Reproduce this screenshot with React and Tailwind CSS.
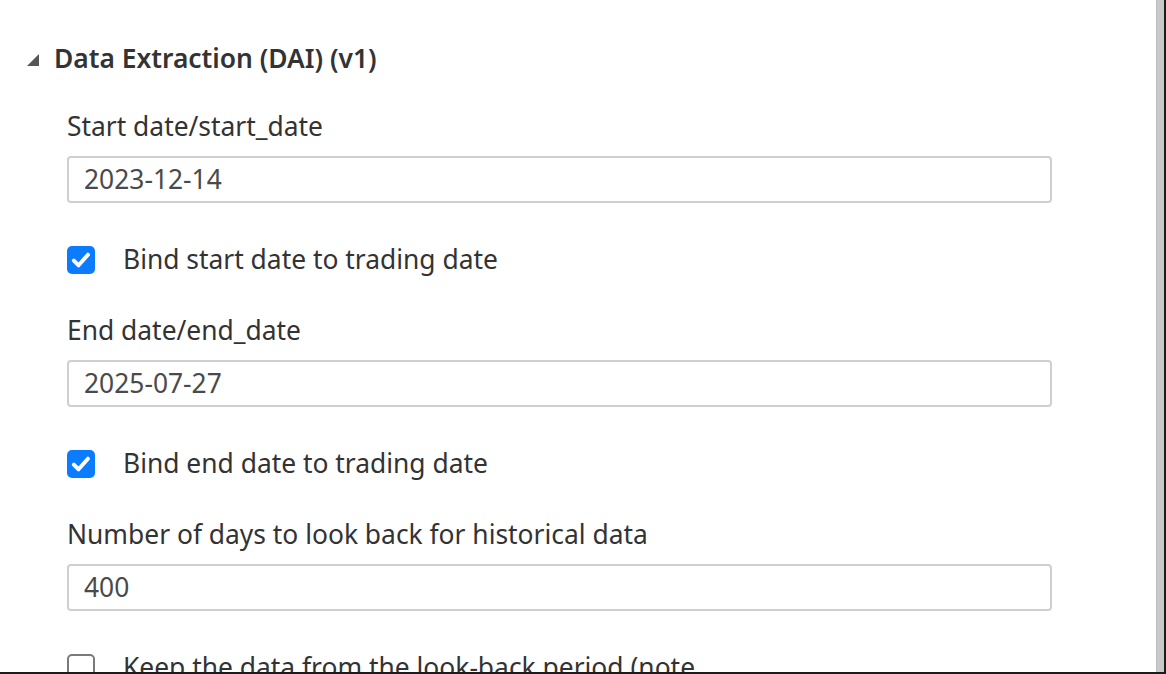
import React from 'react';

const Field = ({label, value}) => (
    <div className="flex flex-col">
        <label className="h-[36px] leading-[36px] text-[26.4px] text-[#333333]">{label}</label>
        <div className="mt-[12px] h-[47px] w-[985px] rounded-[4px] border-2 border-[#cfcfcf] px-[15px] flex items-center">
            <span className="text-[26.4px] text-[#4a4a4a]">{value}</span>
        </div>
    </div>
);

const Check = ({checked, label}) => (
    <div className="flex items-center h-[36px] gap-[28px]">
        {checked ? (
            <span className="w-[28px] h-[28px] rounded-[5px] bg-[#0b7bff] flex items-center justify-center">
                <svg width="22" height="22" viewBox="0 0 20 20">
                    <path d="M3.5 10.5 L7.8 14.8 L16.3 5.2" fill="none" stroke="white" strokeWidth="3.6"
                          strokeLinecap="round" strokeLinejoin="round"/>
                </svg>
            </span>
        ) : (
            <span className="w-[28px] h-[28px] rounded-[5px] border-2 border-[#7a7a7a] bg-white"/>
        )}
        <span className="text-[26.4px] text-[#333333]">{label}</span>
    </div>
);

export default function App() {
    return (
        <div className="w-[1166px] h-[674px] overflow-hidden flex border-b-2 border-[#1c1c1c] bg-white"
             style={{fontFamily: '"Noto Sans", "Open Sans", sans-serif'}}>
            <div className="flex-1 flex flex-col pl-[27px] pt-[41px]">
                {/* header */}
                <div className="flex items-center h-[36px] gap-[15px]">
                    <svg width="12" height="12" viewBox="0 0 12 12" className="mt-[2px]">
                        <polygon points="12,0 12,12 0,12" fill="#555555"/>
                    </svg>
                    <span className="text-[26.4px] font-semibold text-[#333333]">Data Extraction (DAI) (v1)</span>
                </div>

                <div className="pl-[40px] mt-[31px] flex flex-col">
                    <Field label="Start date/start_date" value="2023-12-14"/>
                    <div className="mt-[39px]">
                        <Check checked label="Bind start date to trading date"/>
                    </div>
                    <div className="mt-[34px]">
                        <Field label="End date/end_date" value="2025-07-27"/>
                    </div>
                    <div className="mt-[39px]">
                        <Check checked label="Bind end date to trading date"/>
                    </div>
                    <div className="mt-[34px]">
                        <Field label="Number of days to look back for historical data" value="400"/>
                    </div>
                    <div className="mt-[39px]">
                        <Check label="Keep the data from the look-back period (note"/>
                    </div>
                </div>
            </div>
            <div className="w-[8px] bg-[#c9c9c9] border-l border-[#bdbdbd]"/>
            <div className="w-[2px] bg-[#1c1c1c]"/>
        </div>
    );
}
